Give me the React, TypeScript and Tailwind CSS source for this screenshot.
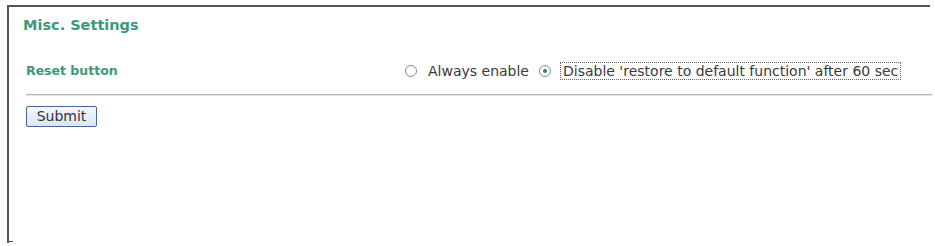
import React from "react";

function Radio({ checked }: { checked?: boolean }) {
  return (
    <span
      className={
        "inline-flex w-[12px] h-[12px] rounded-full border bg-white items-center justify-center shrink-0 " +
        (checked ? "border-[#6a9a80]" : "border-[#8a8a8a]")
      }
    >
      {checked && <span className="block w-[4px] h-[4px] rounded-full bg-[#2f8a4a]" />}
    </span>
  );
}

export default function App() {
  return (
    <div
      className="w-[935px] h-[246px] bg-white pt-[5px] pl-[7px] overflow-hidden"
      style={{ fontFamily: '"DejaVu Sans", Verdana, sans-serif' }}
    >
      <div className="relative w-[923px] h-[238px] border-t-2 border-l-2 border-[#555555]">
        <div className="absolute left-[-2px] bottom-[1px] w-[6px] h-[1px] bg-[#555555]" />
        <div className="pl-[14px] pt-[10px]">
          <div className="text-[14.5px] font-bold text-[#3a9a7a] leading-[17px]">Misc. Settings</div>
          <div className="flex items-center h-[20px] mt-[27px] pl-[3px]">
            <div className="w-[379px] text-[12.5px] font-bold text-[#3a9a7a]">Reset button</div>
            <div className="flex items-center text-[14px] text-[#3a3a3a]">
              <Radio />
              <span className="ml-[11px] leading-[16px]">Always enable</span>
              <span className="ml-[10px] flex"><Radio checked /></span>
              <span className="ml-[10px] px-[2px] outline outline-1 outline-dotted outline-[#666666] leading-[16px]">
                Disable &apos;restore to default function&apos; after 60 sec
              </span>
            </div>
          </div>
          <div className="ml-[3px] mt-[13px] w-[906px] h-[2px] border-t border-[#b5b5b5] border-b border-b-[#e6e6e6]" />
          <div className="pl-[3px] mt-[8px]">
            <button className="w-[71px] h-[21px] rounded-[2px] border border-[#4a6690] bg-gradient-to-b from-[#f4f8ff] to-[#dbe6f6] text-[14px] text-[#333333] leading-none">
              Submit
            </button>
          </div>
        </div>
      </div>
    </div>
  );
}
